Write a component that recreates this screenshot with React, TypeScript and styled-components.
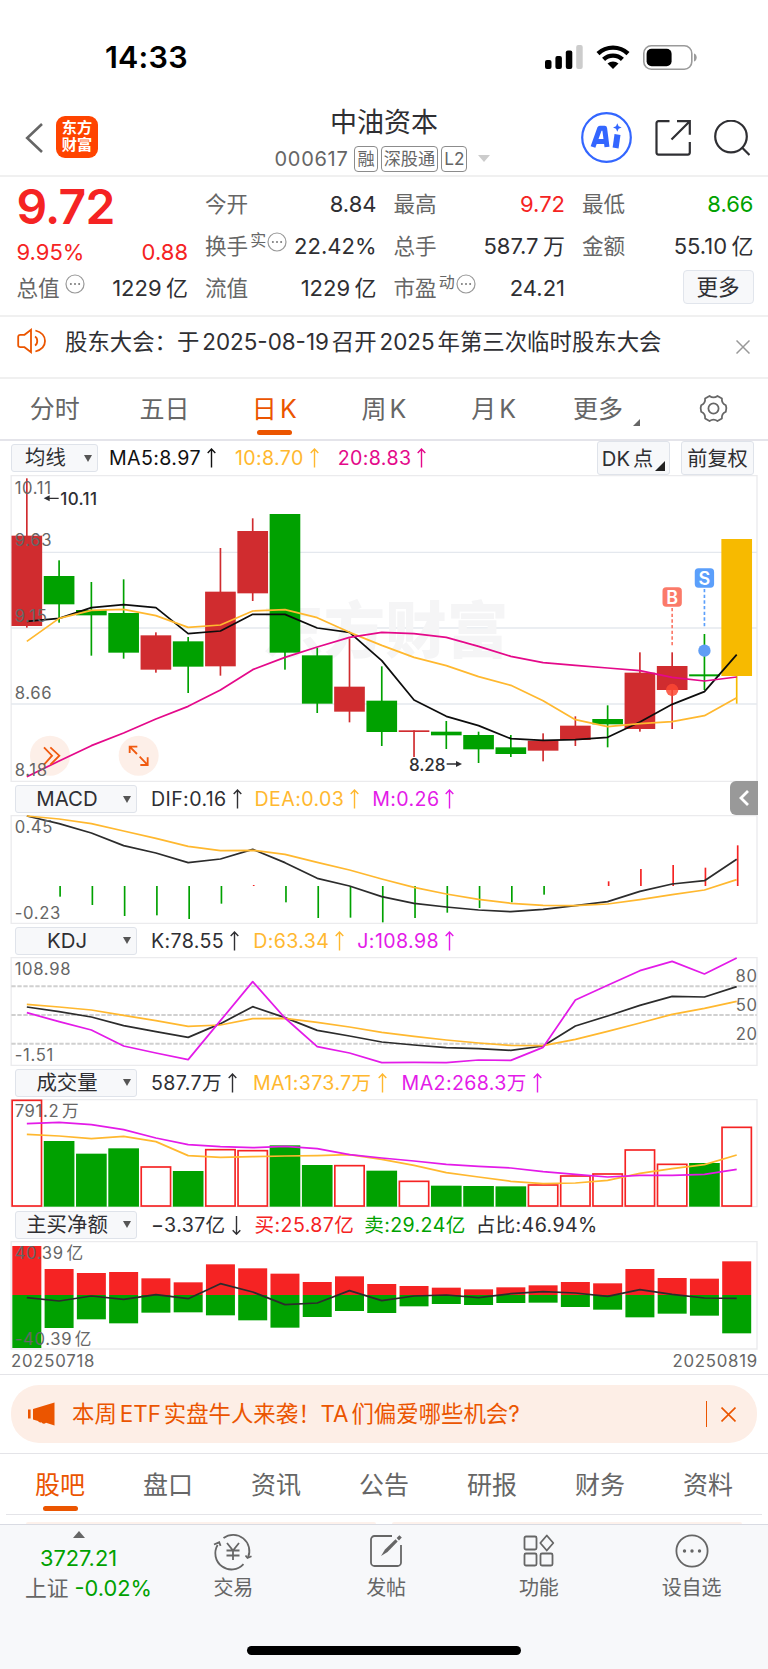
import React from 'react';
import styled, { createGlobalStyle } from 'styled-components';

const RED = '#f52323';
const GREEN = '#00a100';
const ORANGE = '#eb5500';
const YELLOW = '#ffb82f';
const PINK = '#e4098a';
const MAGENTA = '#e31be8';
const INK = '#2f2f33';
const GREY = '#666666';
const LINE = '#ebebed';

const GlobalStyle = createGlobalStyle`
  * { box-sizing: border-box; }
  body {
    margin: 0;
    background: #fff;
    color: ${INK};
    font-family: Inter, "Noto Sans CJK SC", sans-serif;
    word-spacing: -0.11em;
    -webkit-font-smoothing: antialiased;
  }
  svg { display: block; flex: none; }
`;

const Screen = styled.div`
  width: 768px;
  height: 1669px;
  overflow: hidden;
  display: flex;
  flex-direction: column;
  white-space: nowrap;
`;

/* ---------- status bar and title ---------- */

const StatusBar = styled.div`
  height: 100px;
  flex: none;
  display: flex;
  justify-content: space-between;
  align-items: center;
  padding: 14px 71px 0 105px;
`;

const Clock = styled.div`
  font-size: 30.5px;
  line-height: 36px;
  font-weight: 600;
  color: #000;
  letter-spacing: 0.2px;
`;

const StatusIcons = styled.div`
  display: flex;
  align-items: center;
  gap: 13px;
`;

const Header = styled.header`
  height: 77px;
  flex: none;
  display: grid;
  grid-template-columns: 1fr auto 1fr;
  align-items: center;
  border-bottom: 2px solid #f0f0f0;
  padding: 0 18px 0 25px;
`;

const HeaderSide = styled.div<{ $end?: boolean; $gap: number }>`
  display: flex;
  align-items: center;
  gap: ${p => p.$gap}px;
  justify-content: ${p => (p.$end ? 'flex-end' : 'flex-start')};
`;

const Logo = styled.div`
  width: 42px;
  height: 42px;
  border-radius: 9px;
  background: #ff4400;
  color: #fff;
  font-size: 15.2px;
  line-height: 17.5px;
  font-weight: 700;
  text-align: center;
  padding-top: 3px;
  margin-top: -2px;
`;

const TitleBlock = styled.div`
  display: flex;
  flex-direction: column;
  align-items: center;
  padding-right: 7px;
`;

const Title = styled.h1`
  margin: 0;
  font-size: 27px;
  line-height: 36px;
  font-weight: 400;
`;

const SubTitle = styled.div`
  display: flex;
  align-items: center;
  gap: 3px;
  margin: 5px 3px -1px 0;
  color: ${GREY};
`;

const Code = styled.span`
  font-size: 20px;
  line-height: 26px;
  letter-spacing: 0.7px;
  margin-right: 3px;
`;

const Tag = styled.span`
  height: 26px;
  padding: 0 2px;
  border: 1px solid #8c8c8c;
  border-radius: 4px;
  font-size: 17.2px;
  line-height: 24px;
`;

const Caret = styled.i<{ $w: number; $h: number; $color: string; $up?: boolean; $ml?: number }>`
  width: 0;
  height: 0;
  margin-left: ${p => p.$ml ?? 0}px;
  border-left: ${p => p.$w / 2}px solid transparent;
  border-right: ${p => p.$w / 2}px solid transparent;
  ${p => (p.$up ? 'border-bottom' : 'border-top')}: ${p => p.$h}px solid ${p => p.$color};
`;

const Corner = styled.i<{ $size: number; $color: string; $margin?: string }>`
  width: 0;
  height: 0;
  align-self: flex-end;
  margin: ${p => p.$margin ?? 0};
  border-left: ${p => p.$size}px solid transparent;
  border-bottom: ${p => p.$size}px solid ${p => p.$color};
`;

/* ---------- quote ---------- */

const Quote = styled.section`
  height: 140px;
  flex: none;
  display: grid;
  grid-template-columns: repeat(4, 171.5px);
  column-gap: 17px;
  padding: 6px 0 0 16.5px;
  border-bottom: 2px solid #f0f0f0;
`;

const QuoteColumn = styled.div`
  display: flex;
  flex-direction: column;
`;

const QuoteRow = styled.div<{ $h?: number }>`
  height: ${p => p.$h ?? 42}px;
  display: flex;
  justify-content: space-between;
  align-items: center;
`;

const Price = styled.div`
  height: 54px;
  line-height: 48px;
  font-size: 48px;
  font-weight: 600;
  letter-spacing: -0.8px;
  color: ${RED};
`;

const Label = styled.span`
  display: flex;
  align-items: center;
  font-size: 21.6px;
  line-height: 30px;
  color: ${GREY};
`;

const Sup = styled.sup`
  font-size: 16px;
  line-height: 18px;
  align-self: flex-start;
  margin: 0 1px 0 2px;
`;

const Value = styled.span<{ $color?: string }>`
  font-size: 22px;
  line-height: 30px;
  color: ${p => p.$color ?? INK};
`;

const MoreButton = styled.button`
  width: 71px;
  height: 34px;
  margin: 0 0 3px auto;
  padding: 0;
  border: 1px solid #e1e5ec;
  border-radius: 4px;
  background: #f7f8fa;
  color: ${INK};
  font: inherit;
  font-size: 21.6px;
  line-height: 30px;
`;

/* ---------- notice ---------- */

const Notice = styled.section`
  height: 62px;
  flex: none;
  display: flex;
  align-items: flex-start;
  padding: 9px 18px 0 17px;
  border-bottom: 2px solid #f0f0f0;
`;

const NoticeText = styled.span`
  flex: 1;
  margin-left: 18px;
  font-size: 22.4px;
  line-height: 32px;
  word-spacing: -0.15em;
`;

/* ---------- tabs ---------- */

const PeriodTabs = styled.nav`
  height: 62px;
  flex: none;
  display: grid;
  grid-template-columns: repeat(7, 1fr);
  border-bottom: 2px solid #e4e4ea;
`;

const SectionTabs = styled.nav`
  height: 61px;
  flex: none;
  display: grid;
  grid-template-columns: repeat(7, 1fr);
  margin: 0 6px;
  border-bottom: 1px solid #e4e4e8;
`;

const Tab = styled.div<{ $active?: boolean; $top: number }>`
  display: flex;
  flex-direction: column;
  align-items: center;
  padding-top: ${p => p.$top}px;
  font-size: 25px;
  line-height: 34px;
  word-spacing: -0.16em;
  color: ${p => (p.$active ? ORANGE : GREY)};
`;

const TabLabel = styled.span`
  display: flex;
  gap: 10px;
  padding-left: 6px;
`;

const Underline = styled.i`
  width: 35px;
  height: 5px;
  margin-top: 4px;
  border-radius: 3px;
  background: ${ORANGE};
`;

/* ---------- indicators ---------- */

const Indicator = styled.div<{ $h: number; $left: number }>`
  height: ${p => p.$h}px;
  flex: none;
  display: flex;
  align-items: center;
  padding: 0 10px 0 ${p => p.$left}px;
`;

const Select = styled.button<{ $w: number }>`
  width: ${p => p.$w}px;
  height: 28px;
  flex: none;
  display: flex;
  align-items: center;
  padding: 0 5px 0 0;
  border: 1px solid #dfe3ea;
  border-radius: 3px;
  background: #f7f8fa;
  color: ${INK};
  font: inherit;
  font-size: 20.4px;
  line-height: 26px;
`;

const SelectLabel = styled.span`
  flex: 1;
  text-align: center;
  padding-right: 5px;
`;

const Reading = styled.span<{ $color?: string; $ml: number }>`
  display: flex;
  align-items: center;
  gap: 6px;
  margin-left: ${p => p.$ml}px;
  font-size: 19.6px;
  line-height: 26px;
  letter-spacing: 0.38px;
  text-autospace: no-autospace;
  color: ${p => p.$color ?? INK};
`;

const BarButton = styled.button<{ $margin: string }>`
  width: 73px;
  height: 34px;
  flex: none;
  display: flex;
  justify-content: center;
  align-items: center;
  margin: ${p => p.$margin};
  padding: 0 0 2px;
  border: 1px solid #dfe3ea;
  border-radius: 3px;
  background: #f7f8fa;
  color: ${INK};
  font: inherit;
  font-size: 20.2px;
  word-spacing: -0.13em;
`;

const Drawer = styled.div`
  width: 28px;
  height: 34px;
  margin: 0 0 0 auto;
  align-self: flex-end;
  border-radius: 6px 0 0 6px;
  background: #999;
  display: flex;
  align-items: center;
  justify-content: center;
`;

const ChartSvg = styled.svg`
  margin-left: 10px;
  font-family: Inter, "Noto Sans CJK SC", sans-serif;
`;

const Dates = styled.div`
  height: 25px;
  flex: none;
  display: flex;
  justify-content: space-between;
  padding: 0 10px 0 11px;
  border-bottom: 1px solid #e4e4e8;
  font-size: 16.8px;
  line-height: 22px;
  letter-spacing: 0.75px;
  color: ${GREY};
`;

/* ---------- promo ---------- */

const PromoWrap = styled.div`
  height: 79px;
  flex: none;
  padding: 10px 11px 0;
  border-bottom: 1px solid #e4e4e8;
`;

const Promo = styled.div`
  height: 58px;
  display: flex;
  align-items: center;
  padding: 0 21px 0 17px;
  border-radius: 28px;
  background: #fdeee6;
  color: ${ORANGE};
  font-size: 22.4px;
  line-height: 32px;
  word-spacing: -0.15em;
`;

const PromoText = styled.span`
  flex: 1;
  margin-left: 17px;
`;

const PromoDivider = styled.i`
  width: 1px;
  height: 26px;
  margin-right: 14px;
  background: ${ORANGE};
`;

const Peek = styled.div`
  height: 9px;
  flex: none;
  display: flex;
  gap: 16px;
  padding: 7px 26px 0;

  i {
    flex: 1;
    height: 2px;
    border-radius: 20px 20px 0 0;
    background: #fdf1eb;
  }
`;

/* ---------- bottom bar ---------- */

const BottomBar = styled.footer`
  flex: 1;
  background: #f7f8fa;
  border-top: 1px solid #d9dbe3;
  display: flex;
  flex-direction: column;
  justify-content: space-between;
`;

const BottomItems = styled.div`
  display: grid;
  grid-template-columns: 157px repeat(4, 1fr);
`;

const IndexCell = styled.div`
  display: flex;
  flex-direction: column;
  align-items: center;
  padding-top: 6px;
  font-size: 21.8px;
  color: ${GREEN};
`;

const IndexLine = styled.div<{ $mt: number; $ml?: number }>`
  display: flex;
  gap: 6px;
  line-height: 26px;
  margin: ${p => p.$mt}px 0 0 ${p => p.$ml ?? 0}px;
`;

const IndexName = styled.span`
  color: ${GREY};
`;

const ActionCell = styled.div`
  display: flex;
  flex-direction: column;
  align-items: center;
  gap: 3px;
  padding-top: 6px;
  font-size: 20px;
  line-height: 28px;
  color: ${GREY};
`;

const HomeIndicator = styled.div`
  width: 274px;
  height: 9px;
  margin: 0 auto 14px;
  border-radius: 5px;
  background: #000;
`;

/* ---------- small drawings ---------- */

const Arrow = ({ down }: { down?: boolean }) => (
  <svg width="9" height="20" viewBox="0 0 9 20" fill="none" stroke="currentColor" strokeWidth="1.4">
    {down ? <path d="M4.5 1v18M.7 15.2l3.8 4 3.8-4" /> : <path d="M4.5 19.5V1M.7 5l3.8-4 3.8 4" />}
  </svg>
);

const DotsSvg = styled.svg<{ $ml: number }>`
  margin: -9px 0 0 ${p => p.$ml}px;
`;

const Dots = ({ ml = 0 }: { ml?: number }) => (
  <DotsSvg width="20" height="20" viewBox="0 0 20 20" $ml={ml}>
    <circle cx="10" cy="10" r="9" fill="none" stroke="#999" strokeWidth="1.2" />
    <circle cx="5.9" cy="10" r="1" fill="#777" />
    <circle cx="10" cy="10" r="1" fill="#777" />
    <circle cx="14.1" cy="10" r="1" fill="#777" />
  </DotsSvg>
);

const CrossSvg = styled.svg<{ $mt?: number }>`
  margin-top: ${p => p.$mt ?? 0}px;
`;

const Cross = ({ size, color, mt }: { size: number; color: string; mt?: number }) => (
  <CrossSvg width={size} height={size} viewBox="0 0 14 14" stroke={color} strokeWidth="1.5" $mt={mt}>
    <path d="M.5.5l13 13M13.5.5l-13 13" />
  </CrossSvg>
);

const SpeakerSvg = styled.svg`
  margin-top: 2px;
`;

/* ---------- charts ---------- */

const STEP = 96.8;
const cx = (i: number) => 80.5 + STEP * i;
const linePoints = (ys: number[]) => ys.map((y, i) => `${cx(i)},${y}`).join(' ');

const Line = ({ ys, color }: { ys: number[]; color: string }) => (
  <polyline points={linePoints(ys)} fill="none" stroke={color} strokeWidth="5.2" strokeLinejoin="round" />
);

const AxisLabel = ({ x = 44, y, end, children }: { x?: number; y: number; end?: boolean; children: string }) => (
  <text x={x} y={y} fontSize="50" letterSpacing="2" wordSpacing="-8" fill={GREY} textAnchor={end ? 'end' : 'start'}>
    {children}
  </text>
);

// Every plot is drawn in thirds of a pixel; top and bottom are the frame lines.
const Plot = ({ top, bottom, height, children }: {
  top: number; bottom: number; height: number; children: React.ReactNode;
}) => (
  <ChartSvg width={749} height={height} viewBox={`30 ${top - 1} 2247 ${height * 3}`}>
    <path d={`M33.5 ${top + 0.5}H2271V${bottom}H33.5Z`} fill="none" stroke={LINE} strokeWidth="4" />
    {children}
  </ChartSvg>
);

type Candle = [kind: 'r' | 'g' | 'y', high: number, top: number, bottom: number, low: number];

const CANDLES: Candle[] = [
  ['r', 295, 467, 738, 743], ['g', 541, 588, 673, 728], ['g', 606, 690, 706, 827], ['g', 598, 699, 818, 836],
  ['r', 757, 766, 869, 878], ['g', 771, 784, 860, 939], ['r', 504, 635, 859, 887], ['r', 415, 453, 640, 663],
  ['g', 402, 402, 818, 869], ['g', 803, 826, 971, 999], ['r', 775, 920, 995, 1027], ['g', 859, 962, 1056, 1098],
  ['r', 1051, 1051, 1056, 1131], ['g', 1023, 1055, 1066, 1107], ['g', 1055, 1065, 1108, 1149], ['g', 1065, 1102, 1122, 1131],
  ['r', 1060, 1082, 1112, 1144], ['r', 1009, 1037, 1080, 1098], ['g', 976, 1017, 1033, 1102], ['r', 817, 878, 1047, 1055],
  ['r', 817, 858, 930, 1047], ['g', 762, 883, 889, 930], ['y', 477, 477, 888, 971],
];
const CANDLE_COLORS = { r: '#d02c2f', g: GREEN, y: '#f7ba00' };

const MA5 = [724, 715, 683, 674, 683, 761, 753, 703, 703, 744, 757, 842, 960, 1009, 1037, 1076, 1081, 1079, 1072, 1026, 973, 935, 824];
const MA10 = [784, 715, 691, 688, 707, 742, 735, 693, 689, 713, 757, 796, 832, 857, 890, 916, 962, 1019, 1040, 1031, 1025, 1007, 953];
const MA20 = [1190, 1143, 1097, 1059, 1017, 979, 930, 869, 832, 801, 772, 757, 761, 772, 799, 829, 848, 856, 864, 872, 892, 903, 891];

const DIF = [108, 131, 159, 197, 219, 248, 237, 208, 248, 295, 318, 350, 370, 381, 390, 395, 388, 377, 365, 334, 312, 302, 238];
const DEA = [108, 117, 131, 153, 175, 199, 212, 211, 223, 247, 270, 297, 322, 342, 358, 370, 376, 377, 372, 359, 344, 330, 299];
const MACD = [318, 350, 375, 408, 406, 417, 371, 315, 367, 414, 413, 427, 414, 398, 384, 367, 344, 318, 304, 267, 255, 263, 196];

const K = [681, 695, 711, 737, 755, 772, 731, 680, 713, 751, 768, 786, 795, 803, 806, 811, 798, 738, 708, 676, 649, 651, 620];
const D = [673, 681, 690, 706, 722, 739, 735, 716, 715, 727, 741, 757, 769, 780, 789, 796, 797, 778, 754, 729, 703, 685, 664];
const J = [698, 725, 750, 798, 819, 839, 722, 605, 714, 800, 819, 848, 847, 848, 840, 841, 802, 660, 616, 572, 544, 582, 534];

const VOLUME = [106, 228, 266, 250, 306, 318, 254, 257, 241, 300, 302, 317, 349, 362, 363, 364, 360, 333, 327, 255, 298, 294, 187];
const VOLUME_UP = [0, 4, 6, 7, 10, 12, 16, 17, 18, 19, 20, 22];
const VOL_MA1 = [208, 213, 221, 214, 230, 272, 277, 275, 273, 272, 269, 283, 301, 323, 336, 349, 356, 354, 346, 325, 311, 299, 270];
const VOL_MA2 = [176, 172, 179, 194, 219, 239, 245, 248, 244, 251, 269, 279, 288, 298, 304, 309, 320, 328, 336, 331, 331, 328, 313];

const BUY = [543, 612, 624, 621, 640, 652, 598, 610, 626, 651, 634, 657, 663, 668, 673, 667, 661, 651, 655, 612, 639, 641, 589];
const SELL = [849, 789, 763, 775, 743, 742, 751, 766, 788, 756, 738, 744, 724, 717, 720, 714, 713, 726, 734, 757, 746, 752, 805];
const NET = [698, 708, 693, 703, 689, 701, 656, 681, 719, 714, 677, 707, 693, 690, 698, 686, 680, 684, 694, 674, 688, 699, 700];

const Marker = ({ i, y, dash, dot, color, dotColor, letter }: {
  i: number; y: number; dash: number; dot: number; color: string; dotColor: string; letter: string;
}) => (
  <g>
    <line x1={cx(i)} x2={cx(i)} y1={y + 33} y2={dash} stroke={color} strokeWidth="5" strokeDasharray="10 7" />
    <circle cx={cx(i)} cy={dot} r="18.5" fill={dotColor} />
    <rect x={cx(i) - 29} y={y - 29} width="58" height="58" rx="11" fill={color} />
    <text x={cx(i)} y={y + 20} fontSize="54" fontWeight="600" fill="#fff" textAnchor="middle">{letter}</text>
  </g>
);

const PriceChart = () => (
  <Plot top={286} bottom={1204} height={308}>
    {[517, 744, 972].map(y => (
      <line key={y} x1="33" x2="2271" y1={y} y2={y} stroke="#e4e8ee" strokeWidth="4" />
    ))}
    <text x="786" y="820" fontSize="184" fontWeight="900" letterSpacing="1" fill="#f5f5f6">东方财富</text>
    <circle cx="150" cy="1127" r="60" fill="#fdefe8" />
    <circle cx="416" cy="1127" r="60" fill="#fdefe8" />
    {CANDLES.map(([kind, high, top, bottom, low], i) => (
      <g key={i} fill={CANDLE_COLORS[kind]}>
        <rect x={cx(i) - 2.5} y={high} width="5" height={low - high} />
        <rect x={cx(i) - 46} y={top} width="92" height={bottom - top} />
      </g>
    ))}
    <Line ys={MA5} color="#0d0d0d" />
    <Line ys={MA10} color={YELLOW} />
    <Line ys={MA20} color={PINK} />
    <path d="M132 1102l24 25-24 27M151 1102l27 25-27 27" fill="none" stroke="#f05a10" strokeWidth="5.5" />
    <path d="M389 1119v-19h23M389 1100l22 22M443 1132v23h-22M443 1155l-24-25" fill="none" stroke="#f05a10" strokeWidth="5.5" />
    <Marker i={20} y={651} dash={797} dot={930} color="#fb7a69" dotColor="rgba(251,72,50,.85)" letter="B" />
    <Marker i={21} y={594} dash={741} dot={812} color="#5b9ffb" dotColor="#5f9df5" letter="S" />
    <AxisLabel y={342}>10.11</AxisLabel>
    <AxisLabel y={499}>9.63</AxisLabel>
    <AxisLabel y={727}>9.15</AxisLabel>
    <AxisLabel y={956}>8.66</AxisLabel>
    <AxisLabel y={1187}>8.18</AxisLabel>
    <g fill={INK} fontSize="51" fontWeight="500">
      <path d="M131 355l18-9v7h27v4h-27v7z" />
      <text x="181" y="374" textLength="110">10.11</text>
      <text x="1227" y="1172" textLength="109">8.28</text>
      <path d="M1386 1152l-18-9v7h-28v4h28v7z" />
    </g>
  </Plot>
);

const MacdChart = () => (
  <Plot top={106} bottom={430} height={109}>
    {MACD.map((v, i) => (
      <rect key={i} x={cx(i) + 0.5} y={Math.min(v, 318)} width="5" height={Math.abs(v - 318)} fill={v > 318 ? GREEN : RED} />
    ))}
    <Line ys={DIF} color="#2c2c2c" />
    <Line ys={DEA} color={YELLOW} />
    <AxisLabel y={158}>0.45</AxisLabel>
    <AxisLabel y={417}>-0.23</AxisLabel>
  </Plot>
);

const KdjChart = () => (
  <Plot top={532} bottom={856} height={109}>
    {[619, 705, 791].map(y => (
      <line key={y} x1="34" x2="2270" y1={y} y2={y} stroke="#d0d0d0" strokeWidth="6" strokeDasharray="13 5" />
    ))}
    <Line ys={K} color="#2c2c2c" />
    <Line ys={D} color={YELLOW} />
    <Line ys={J} color={MAGENTA} />
    <AxisLabel y={584}>108.98</AxisLabel>
    <AxisLabel y={843}>-1.51</AxisLabel>
    <AxisLabel x={2273} y={607} end>80</AxisLabel>
    <AxisLabel x={2273} y={693} end>50</AxisLabel>
    <AxisLabel x={2273} y={779} end>20</AxisLabel>
  </Plot>
);

const VolumeChart = () => (
  <Plot top={103} bottom={425} height={109}>
    {VOLUME.map((y, i) =>
      VOLUME_UP.includes(i) ? (
        <rect key={i} x={cx(i) - 44} y={y} width="88" height={423 - y} fill="#fff" stroke={RED} strokeWidth="5" />
      ) : (
        <rect key={i} x={cx(i) - 46} y={y} width="92" height={425 - y} fill={GREEN} />
      ),
    )}
    <Line ys={VOL_MA1} color={YELLOW} />
    <Line ys={VOL_MA2} color={MAGENTA} />
    <AxisLabel y={156}>791.2 万</AxisLabel>
  </Plot>
);

const NetChart = () => (
  <Plot top={529} bottom={852} height={109}>
    {BUY.map((y, i) => (
      <g key={i}>
        <rect x={cx(i) - 43.5} y={y} width="87" height={690 - y} fill={RED} />
        <rect x={cx(i) - 43.5} y="690" width="87" height={SELL[i] - 690} fill={GREEN} />
      </g>
    ))}
    <Line ys={NET} color="#2c2c2c" />
    <AxisLabel y={582}>40.39 亿</AxisLabel>
    <AxisLabel y={841}>-40.39 亿</AxisLabel>
  </Plot>
);

const Picker = ({ label, width = 122 }: { label: string; width?: number }) => (
  <Select $w={width}>
    <SelectLabel>{label}</SelectLabel>
    <Caret $w={8} $h={7} $color="#555" />
  </Select>
);

const SECTIONS = ['股吧', '盘口', '资讯', '公告', '研报', '财务', '资料'];

export default function App() {
  return (
    <Screen>
      <GlobalStyle />
      <StatusBar>
        <Clock>14:33</Clock>
        <StatusIcons>
          <svg width="38" height="24" viewBox="0 0 38 24">
            <rect x="0" y="15" width="6.5" height="9" rx="2" />
            <rect x="10.4" y="11" width="6.5" height="13" rx="2" />
            <rect x="20.8" y="5.5" width="6.5" height="18.5" rx="2" />
            <rect x="31.2" y="0" width="6.5" height="24" rx="2" fill="#ccc" />
          </svg>
          <svg width="34" height="24" viewBox="0 0 34 24" fill="none" stroke="#000" strokeWidth="4.4">
            <path d="M2 8.6a21.8 21.8 0 0 1 30 0" />
            <path d="M7.6 14.4a13.6 13.6 0 0 1 18.8 0" />
            <path d="M17 24l-5.5-5.4a8 8 0 0 1 11 0z" fill="#000" stroke="none" />
          </svg>
          <svg width="54" height="25" viewBox="0 0 54 25">
            <rect x=".8" y=".8" width="48" height="23.4" rx="7.5" fill="none" stroke="#9a9a9a" strokeWidth="1.6" />
            <rect x="3.6" y="3.8" width="25" height="17.4" rx="5" />
            <path d="M51 8.5c3.6 1 3.6 7 0 8z" fill="#9a9a9a" />
          </svg>
        </StatusIcons>
      </StatusBar>

      <Header>
        <HeaderSide $gap={13}>
          <svg width="18" height="30" viewBox="0 0 18 30" fill="none" stroke={GREY} strokeWidth="2.6">
            <path d="M17 1L2.2 15 17 29" />
          </svg>
          <Logo>
            东方
            <br />
            财富
          </Logo>
        </HeaderSide>
        <TitleBlock>
          <Title>中油资本</Title>
          <SubTitle>
            <Code>000617</Code>
            <Tag>融</Tag>
            <Tag>深股通</Tag>
            <Tag>L2</Tag>
            <Caret $w={12} $h={7} $color="#ccc" $ml={8} />
          </SubTitle>
        </TitleBlock>
        <HeaderSide $end $gap={23}>
          <svg width="51" height="51" viewBox="0 0 51 51">
            <circle cx="25.5" cy="25.5" r="24.3" fill="none" stroke="#3366ff" strokeWidth="2.2" />
            <g fill="none" stroke="#3366ff" strokeWidth="5" strokeLinejoin="round">
              <path d="M12 35L18.8 16.2H23.6L26 35M15.5 29.5H25" />
              <path d="M36.5 22.5L34.6 36" strokeWidth="6" />
            </g>
            <path d="M36.3 11.2l1.3 3 3 1.3-3 1.3-1.3 3-1.3-3-3-1.3 3-1.3z" fill="#3366ff" />
          </svg>
          <svg width="36" height="36" viewBox="0 0 36 36" fill="none" stroke={INK} strokeWidth="2.2">
            <path d="M14.5 1.2H3.5a2 2 0 0 0-2 2v29.4a2 2 0 0 0 2 2h29.3a2 2 0 0 0 2-2V22M22 1.2h12.8v13.5M34.8 1.2L16.5 19.5" />
          </svg>
          <svg width="36" height="36" viewBox="0 0 36 36" fill="none" stroke={INK} strokeWidth="2.2">
            <circle cx="17" cy="16.5" r="15.8" />
            <path d="M28.2 27.7l7.3 7.3" />
          </svg>
        </HeaderSide>
      </Header>

      <Quote>
        <QuoteColumn>
          <Price>9.72</Price>
          <QuoteRow $h={30}>
            <Value $color={RED}>9.95%</Value>
            <Value $color={RED}>0.88</Value>
          </QuoteRow>
          <QuoteRow>
            <Label>总值<Dots ml={5} /></Label>
            <Value>1229 亿</Value>
          </QuoteRow>
        </QuoteColumn>
        <QuoteColumn>
          <QuoteRow><Label>今开</Label><Value>8.84</Value></QuoteRow>
          <QuoteRow><Label>换手<Sup>实</Sup><Dots /></Label><Value>22.42%</Value></QuoteRow>
          <QuoteRow><Label>流值</Label><Value>1229 亿</Value></QuoteRow>
        </QuoteColumn>
        <QuoteColumn>
          <QuoteRow><Label>最高</Label><Value $color={RED}>9.72</Value></QuoteRow>
          <QuoteRow><Label>总手</Label><Value>587.7 万</Value></QuoteRow>
          <QuoteRow><Label>市盈<Sup>动</Sup><Dots /></Label><Value>24.21</Value></QuoteRow>
        </QuoteColumn>
        <QuoteColumn>
          <QuoteRow><Label>最低</Label><Value $color={GREEN}>8.66</Value></QuoteRow>
          <QuoteRow><Label>金额</Label><Value>55.10 亿</Value></QuoteRow>
          <QuoteRow><MoreButton>更多</MoreButton></QuoteRow>
        </QuoteColumn>
      </Quote>

      <Notice>
        <SpeakerSvg width="30" height="26" viewBox="0 0 30 26" fill="none" stroke={ORANGE} strokeWidth="1.8">
          <path d="M14 1.8v22.4l-6.5-5H3.2c-1.2 0-2-.8-2-2V8.8c0-1.2.8-2 2-2h4.3z" />
          <path d="M18 8.5c3 1.6 3 7.4 0 9M18.4 2.5c12.8 3.6 12.8 17.4 0 21" />
        </SpeakerSvg>
        <NoticeText>股东大会：于 2025-08-19 召开 2025 年第三次临时股东大会</NoticeText>
        <Cross size={14} color="#999" mt={14} />
      </Notice>

      <PeriodTabs>
        <Tab $top={13}>分时</Tab>
        <Tab $top={13}>五日</Tab>
        <Tab $top={13} $active>日 K<Underline /></Tab>
        <Tab $top={13}>周 K</Tab>
        <Tab $top={13}>月 K</Tab>
        <Tab $top={13}><TabLabel>更多<Corner $size={7} $color={GREY} /></TabLabel></Tab>
        <Tab $top={14}>
          <svg width="31" height="31" viewBox="0 0 28 28" fill="none" stroke={GREY} strokeWidth="1.6">
            <circle cx="14" cy="14" r="4.6" />
            <path d="M10.4 2.7c2.3 1.6 4.9 1.6 7.2 0l4 2.3c-.3 2.7.8 4.7 3.5 6 .8 2 .8 4 0 6-2.7 1.3-3.8 3.3-3.5 6l-4 2.3c-2.3-1.6-4.9-1.6-7.2 0l-4-2.3c.3-2.7-.8-4.7-3.5-6-.8-2-.8-4 0-6 2.7-1.3 3.8-3.3 3.5-6z" strokeLinejoin="round" />
          </svg>
        </Tab>
      </PeriodTabs>

      <Indicator $h={34} $left={11}>
        <Picker label="均线" width={87} />
        <Reading $ml={11} $color="#111">MA5:8.97<Arrow /></Reading>
        <Reading $ml={19} $color={YELLOW}>10:8.70<Arrow /></Reading>
        <Reading $ml={19} $color={PINK}>20:8.83<Arrow /></Reading>
        <BarButton $margin="0 0 0 auto">DK 点<Corner $size={10} $color="#222" $margin="0 0 1px 2px" /></BarButton>
        <BarButton $margin="0 4px 0 11px">前复权</BarButton>
      </Indicator>
      <PriceChart />

      <Indicator $h={32} $left={15}>
        <Picker label="MACD" />
        <Reading $ml={14}>DIF:0.16<Arrow /></Reading>
        <Reading $ml={13} $color={YELLOW}>DEA:0.03<Arrow /></Reading>
        <Reading $ml={13} $color={MAGENTA}>M:0.26<Arrow /></Reading>
        <Drawer>
          <svg width="10" height="16" viewBox="0 0 10 16" fill="none" stroke="#fff" strokeWidth="2.8"><path d="M9 1L2 8l7 7" /></svg>
        </Drawer>
      </Indicator>
      <MacdChart />

      <Indicator $h={33} $left={15}>
        <Picker label="KDJ" />
        <Reading $ml={14}>K:78.55<Arrow /></Reading>
        <Reading $ml={14} $color={YELLOW}>D:63.34<Arrow /></Reading>
        <Reading $ml={13} $color={MAGENTA}>J:108.98<Arrow /></Reading>
      </Indicator>
      <KdjChart />

      <Indicator $h={33} $left={15}>
        <Picker label="成交量" />
        <Reading $ml={14}>587.7万<Arrow /></Reading>
        <Reading $ml={16} $color={YELLOW}>MA1:373.7万<Arrow /></Reading>
        <Reading $ml={15} $color={MAGENTA}>MA2:268.3万<Arrow /></Reading>
      </Indicator>
      <VolumeChart />

      <Indicator $h={33} $left={15}>
        <Picker label="主买净额" />
        <Reading $ml={14}>−3.37亿<Arrow down /></Reading>
        <Reading $ml={14} $color={RED}>买:25.87亿</Reading>
        <Reading $ml={10} $color={GREEN}>卖:29.24亿</Reading>
        <Reading $ml={10}>占比:46.94%</Reading>
      </Indicator>
      <NetChart />
      <Dates>
        <span>20250718</span>
        <span>20250819</span>
      </Dates>

      <PromoWrap>
        <Promo>
          <svg width="27" height="24" viewBox="0 0 27 24" fill={ORANGE}>
            <path d="M0 7.5h2.6v9H0zM5 7L26.5.5v23L18 20.8c-1.5 1.6-4 1-4.5-.5-1.5.5-2.8 0-3.5-1.2L5 17.5z" />
          </svg>
          <PromoText>本周 ETF 实盘牛人来袭！TA 们偏爱哪些机会?</PromoText>
          <PromoDivider />
          <Cross size={15} color={ORANGE} />
        </Promo>
      </PromoWrap>

      <SectionTabs>
        {SECTIONS.map((name, i) => (
          <Tab key={name} $top={14} $active={i === 0}>
            {name}
            {i === 0 && <Underline />}
          </Tab>
        ))}
      </SectionTabs>
      <Peek><i /><i /></Peek>

      <BottomBar>
        <BottomItems>
          <IndexCell>
            <Caret $w={12} $h={7} $color="#666" $up />
            <IndexLine $mt={7}>3727.21</IndexLine>
            <IndexLine $mt={4} $ml={20}><IndexName>上证</IndexName>-0.02%</IndexLine>
          </IndexCell>
          <ActionCell>
            <svg width="40" height="40" viewBox="0 0 40 40" fill="none" stroke={GREY} strokeWidth="1.8">
              <path d="M10.5 7A16.2 16.2 0 0 1 35 26.5M30.5 33.2A16.2 16.2 0 0 1 4.6 14" />
              <path d="M1 13.5l5.2-2.2 1.4 3.5M32.5 24.5l2 2.5 4-1.8" />
              <path d="M14 12l6 7.5 6-7.5M20 19.5V29M13.5 19.5h13M13.5 24.5h13" />
            </svg>
            交易
          </ActionCell>
          <ActionCell>
            <svg width="40" height="40" viewBox="0 0 40 40" fill="none" stroke={GREY} strokeWidth="1.8">
              <path d="M26 5H8.5A3.5 3.5 0 0 0 5 8.5v23A3.5 3.5 0 0 0 8.5 35h23a3.5 3.5 0 0 0 3.5-3.5V14" />
              <path d="M15 25l4-6.5L29.5 8.3l2.2 2.2L21.5 21z" fill={GREY} stroke="none" />
              <path d="M31.8 8.2l2.8-2.8" strokeWidth="3.4" />
            </svg>
            发帖
          </ActionCell>
          <ActionCell>
            <svg width="40" height="40" viewBox="0 0 40 40" fill="none" stroke={GREY} strokeWidth="1.8">
              <rect x="5.5" y="5.5" width="12" height="13" rx="1.5" />
              <rect x="5.5" y="22.5" width="12" height="12" rx="1.5" />
              <rect x="21.5" y="22.5" width="12" height="12" rx="1.5" />
              <path d="M27.8 4.5l6.5 7.5-6.5 7.5-6.5-7.5z" strokeLinejoin="round" />
            </svg>
            功能
          </ActionCell>
          <ActionCell>
            <svg width="40" height="40" viewBox="0 0 40 40" fill="none" stroke={GREY} strokeWidth="1.8">
              <circle cx="20" cy="20" r="15.6" />
              <g fill={GREY} stroke="none">
                <circle cx="12.5" cy="20" r="1.7" /><circle cx="20" cy="20" r="1.7" /><circle cx="27.5" cy="20" r="1.7" />
              </g>
            </svg>
            设自选
          </ActionCell>
        </BottomItems>
        <HomeIndicator />
      </BottomBar>
    </Screen>
  );
}
